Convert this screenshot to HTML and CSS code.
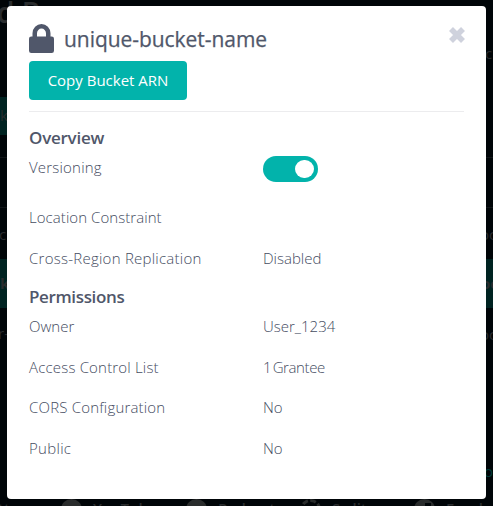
FILE: index.html
```html
<!DOCTYPE html>
<html lang="en">
<head>
<meta charset="utf-8">
<title>Bucket details</title>
<link rel="stylesheet" href="styles.css">
</head>
<body>
<div class="backdrop" aria-hidden="true">
  <span class="bg-title">d B</span>
  <span class="bg-band band-button">k</span>
  <span class="bg-rule rule-one"></span>
  <span class="bg-rule rule-two"></span>
  <span class="bg-text head-right">c</span>
  <span class="bg-text row-one-left">c</span>
  <span class="bg-text row-one-right">oc</span>
  <span class="bg-band band-row"><b>k</b><b>oc</b></span>
  <span class="bg-text row-three-left">r-</span>
  <span class="bg-text row-three-right">oc</span>
  <span class="bg-text bg-link">o</span>
  <div class="footer-links">
    <span class="foot-end">tter</span>
    <i class="disc"></i><span class="foot-one">YouTube</span>
    <i class="disc"></i><span class="foot-two">Podcast</span>
    <i class="disc ring"></i><span class="foot-three">Swlit</span>
    <i class="disc disc-f"></i><span>Faceb</span>
  </div>
</div>
<main class="dialog">
  <header class="dialog-header">
    <svg class="lock" viewBox="0 0 25 29"><path fill="currentColor" d="M3.500 12.500V9.300a9 9.300 0 0 1 18 0v3.200h1.200A2.300 2.300 0 0 1 25 14.800v11.900a2.300 2.300 0 0 1-2.300 2.300H2.300A2.300 2.300 0 0 1 0 26.700V14.800a2.300 2.300 0 0 1 2.300-2.300zM8 12.500h9V9.300a4.500 4.700 0 0 0-9 0z"/></svg>
    <h1 class="title">unique-bucket-name</h1>
    <svg class="close" viewBox="0 0 18 18"><path d="M3 3l12 12m0-12l-12 12" fill="none" stroke="currentColor" stroke-width="5.600"/></svg>
  </header>
  <button class="copy">Copy Bucket ARN</button>
  <h2 class="section-title overview">Overview</h2>
  <dl class="rows overview-rows">
    <dt class="t-version">Versioning</dt><dd><span class="toggle"></span></dd>
    <dt class="t-location">Location Constraint</dt><dd></dd>
    <dt class="t-cross">Cross-Region Replication</dt><dd>Disabled</dd>
  </dl>
  <h2 class="section-title permissions">Permissions</h2>
  <dl class="rows permission-rows">
    <dt>Owner</dt><dd>User_1234</dd>
    <dt class="t-acl">Access Control List</dt><dd class="t-grantee">1 Grantee</dd>
    <dt class="t-cors">CORS Configuration</dt><dd>No</dd>
    <dt class="t-public">Public</dt><dd>No</dd>
  </dl>
</main>
</body>
</html>
```
FILE: styles.css
```css
* { box-sizing: border-box; }
body {
  margin: 0;
  width: 493px;
  height: 506px;
  padding: 6px 7px 7px;
  overflow: hidden;
  background: #000508;
  color: #50576a;
  font-family: "Open Sans", "Noto Sans", sans-serif;
}
.dialog {
  position: relative;
  width: 479px;
  height: 493px;
  padding: 18px 22px;
  border-radius: 4px;
  background: #fff;
}
.dialog-header { display: flex; height: 37px; }
.lock { width: 25px; height: 29px; margin-right: 10px; flex: none; }
.title { margin: 0; font-size: 21px; line-height: 30px; font-weight: 500; letter-spacing: -0.05px; white-space: nowrap; -webkit-text-stroke: 0.25px currentColor; }
.close { width: 18px; height: 18px; margin: 2px -2px 0 auto; color: #cfd2dd; }
.copy {
  display: block;
  width: 158px;
  height: 39px;
  padding: 0;
  border: 0;
  border-radius: 4px;
  background: #02b3ab;
  color: #fff;
  font: 400 15px/37px "Open Sans", sans-serif;
}
.section-title { margin: 0; font-size: 17px; line-height: 24px; font-weight: 600; }
.overview { margin-top: 11px; padding-top: 14px; border-top: 1px solid #ececee; letter-spacing: -0.25px; }
.rows {
  display: grid;
  grid-template-columns: 234px 1fr;
  margin: 0;
  color: #454c5f;
  font-size: 15px;
  line-height: 22px;
  font-weight: 300;
  white-space: nowrap;
}
.rows dd { margin: 0; }
.overview-rows { margin-top: 6px; grid-template-rows: 50px 41px 24px; }
.permissions { margin-top: 14px; letter-spacing: -0.36px; }
.permission-rows { margin-top: 6px; grid-template-rows: 41px 40px 41px 24px; }
.t-version { letter-spacing: 0.2px; }
.t-location { letter-spacing: 0.06px; }
.t-cross { letter-spacing: 0.25px; }
.t-acl, .t-cors { letter-spacing: 0.18px; }
.t-public { letter-spacing: 0.3px; }
.rows .t-grantee { letter-spacing: -0.4px; word-spacing: -2px; }
.toggle { display: block; width: 55px; height: 26px; padding: 4px; border-radius: 13px; background: #02b3ab; }
.toggle::after { content: ""; display: block; width: 19px; height: 18px; margin-left: 28px; border-radius: 9px; background: #fff; }

.backdrop { position: absolute; inset: 0; overflow: hidden; color: #292c2e; font-size: 15px; line-height: 20px; }
.backdrop > * { position: absolute; }
.bg-title { left: -3px; top: -6px; font-size: 28px; line-height: 36px; font-weight: 600; }
.bg-band { background: #002321; }
.band-button { left: 0; top: 97px; width: 160px; height: 38px; line-height: 37px; }
.band-row { left: 0; top: 259px; width: 498px; height: 49px; display: flex; justify-content: space-between; line-height: 49px; }
.bg-rule { left: 0; width: 493px; height: 1px; background: #101518; }
.rule-one { top: 157px; }
.rule-two { top: 207px; }
.head-right { left: 485px; top: 43px; }
.row-one-left { left: -1px; top: 224px; }
.row-one-right { left: 480px; top: 224px; }
.row-three-left { left: -2px; top: 323px; }
.row-three-right { left: 480px; top: 324px; }
.bg-link { left: 484px; top: 461px; color: #003c38; }
.footer-links { left: 0; top: 499px; display: flex; font-weight: 600; line-height: 18px; white-space: nowrap; }
.foot-end { width: 61px; text-indent: -2px; }
.foot-one { width: 93px; }
.foot-two, .foot-three { width: 82px; }
.disc { flex: none; width: 21px; height: 21px; margin-right: 11px; border-radius: 50%; background: #292c2c; }
.ring { background: none; border: 3px dashed #292c2c; }
.disc-f { background: linear-gradient(#000508, #000508) 11px 4px / 6px 3px no-repeat #292c2c; }
```
